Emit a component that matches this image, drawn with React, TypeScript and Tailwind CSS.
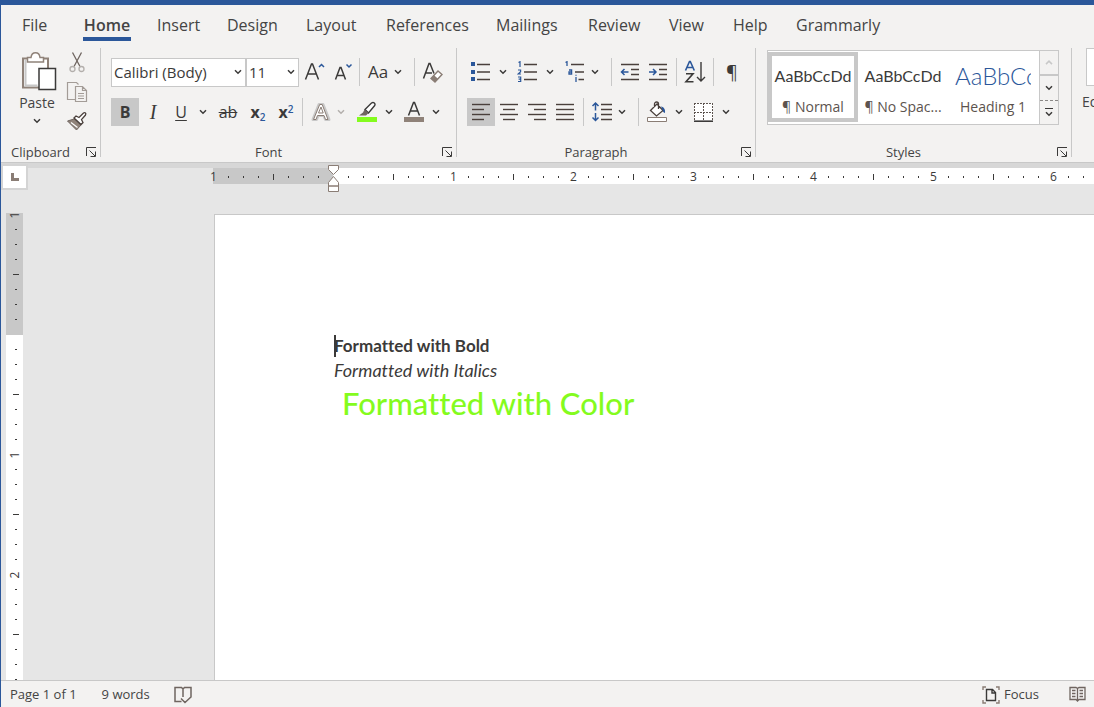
import React from "react";

const UI = "font-['Open_Sans','Noto_Sans',sans-serif]";
const DOC = "font-['Lato','Open_Sans',sans-serif] [font-variant-ligatures:none]";

/* ---------- shared pieces ---------- */

function Chevron({ tone = "#3b3a39" }: { tone?: string }) {
  return (
    <svg width="8" height="6" viewBox="0 0 8 6" fill="none" stroke={tone} strokeWidth="1.5">
      <path d="M1 1.2 4 4.2 7 1.2" />
    </svg>
  );
}

type ToolProps = { label: string; active?: boolean; children: React.ReactNode };

function Tool({ label, active, children }: ToolProps) {
  return (
    <button
      type="button"
      aria-label={label}
      className={`flex h-7 w-7 shrink-0 items-center justify-center text-[#3b3a39] ${active ? "bg-[#c8c8c8]" : ""}`}
    >
      {children}
    </button>
  );
}

function Arrow({ label, narrow, tone }: { label: string; narrow?: boolean; tone?: string }) {
  return (
    <button
      type="button"
      aria-label={label}
      className={`flex h-7 shrink-0 items-center justify-center ${narrow ? "w-3" : "w-4"}`}
    >
      <Chevron tone={tone} />
    </button>
  );
}

function Rule({ className = "mx-1" }: { className?: string }) {
  return <span className={`h-7 w-px shrink-0 bg-[#c8c8c8] ${className}`} />;
}

function Launcher({ label }: { label: string }) {
  return (
    <button type="button" aria-label={label} className="absolute right-px bottom-0 flex h-4 w-4 items-center justify-center">
      <svg width="11" height="11" viewBox="0 0 11 11" fill="none" stroke="#3b3a39">
        <path d="M.5 9V.5H10M3.5 3.5 9 9M9.5 4.5v5h-5" />
      </svg>
    </button>
  );
}

function Group({ name, width, children }: { name: string; width: string; children: React.ReactNode }) {
  return (
    <>
      <section aria-label={name} className={`relative flex shrink-0 flex-col justify-between ${width}`}>
        {children}
        <h2 className="pr-5 text-center text-[13px] leading-4 text-[#444]">{name}</h2>
        <Launcher label={`${name} settings`} />
      </section>
      <span className="h-[109px] w-px shrink-0 bg-[#c8c8c8]" />
    </>
  );
}

/* ---------- icons ---------- */

const svg = { width: 22, height: 22, viewBox: "0 0 22 22", fill: "none" } as const;

function LinesIcon({ rows }: { rows: [number, number][] }) {
  return (
    <svg {...svg} stroke="#4a403c" strokeWidth="1.4">
      {rows.map(([a, b], i) => (
        <path key={i} d={`M${a} ${3.5 + i * 5}H${b}`} />
      ))}
    </svg>
  );
}

function BulletsIcon() {
  return (
    <svg {...svg}>
      <path d="M1 1h4v4H1zM1 9h4v4H1zM1 16h4v4H1z" fill="#2b579a" />
      <path d="M7 3.5h13M7 11h13M7 18.5h13" stroke="#4a403c" strokeWidth="1.4" />
    </svg>
  );
}

function NumberingIcon() {
  return (
    <svg {...svg}>
      <path
        d="M1.500 1.500 3 .7V6M1 9h2.600v1.800L1.200 13H4M1 16h2.700v4.500H1M1.600 18.200h2"
        stroke="#2b579a"
        strokeWidth="1.2"
      />
      <path d="M7 3.5h13M7 11h13M7 18.5h13" stroke="#4a403c" strokeWidth="1.4" />
    </svg>
  );
}

function MultilevelIcon() {
  return (
    <svg {...svg}>
      <path
        d="M1.500 1.500 3 .7V5M5 9h2.600v4H5v-2h2.600M12 16v5M12 13.800v1"
        stroke="#2b579a"
        strokeWidth="1.3"
      />
      <path d="M7 3.5h13M11 11h9M14.500 18.500h5.500" stroke="#4a403c" strokeWidth="1.4" />
    </svg>
  );
}

function IndentIcon({ out }: { out?: boolean }) {
  return (
    <svg {...svg}>
      <path d="M2 3.500h18M12 8.500h8M12 13.500h8M2 18.500h18" stroke="#4a403c" strokeWidth="1.400" />
      <path d={out ? "M9.500 11H2.500M5.500 8l-3 3 3 3" : "M2 11h7M6 8l3 3-3 3"} stroke="#2b579a" strokeWidth="1.500" />
    </svg>
  );
}

function SortIcon() {
  return (
    <svg width="22" height="24" viewBox="0 0 22 24" fill="none">
      <path d="m1.500 10.500 4-9h.8l4 9M3 7.500h6" stroke="#2b579a" strokeWidth="1.600" />
      <path d="M2 13.800h7L2 21.700h7.500" stroke="#3b3a39" strokeWidth="1.600" />
      <path d="M17 2v19M13 17l4 4 4-4" stroke="#3b3a39" strokeWidth="1.400" />
    </svg>
  );
}

function SpacingIcon() {
  return (
    <svg {...svg}>
      <path d="M4.500 2.500v7M1.500 5l3-3 3 3M4.500 12v7M1.500 16.500l3 3 3-3" stroke="#2b579a" strokeWidth="1.500" />
      <path d="M10 3.500h11M10 8.500h11M10 13.500h11M10 18.500h11" stroke="#4a403c" strokeWidth="1.400" />
    </svg>
  );
}

function ShadingIcon() {
  return (
    <svg {...svg}>
      <path d="M11 3 17 9.500 10.500 15 4.500 9.500zM8.500 6V3a2 2 0 0 1 4 0v5" stroke="#4a403c" strokeWidth="1.300" fill="#fff" />
      <path d="M15 5.500c3 .5 4.500 3 4 6.500-2-.5-2-2-2.500-3z" fill="#2b579a" />
      <path d="M1.500 16.500h19v4h-19z" fill="#fff" stroke="#8a7d75" />
    </svg>
  );
}

function BordersIcon() {
  return (
    <svg {...svg}>
      <path d="M1 2h19v18H1z" fill="#fff" />
      <path d="M1 2.500h19M1 11.500h19M1.500 2v18M10.500 2v18M19.500 2v18" stroke="#5c534e" strokeDasharray="2 1" />
      <path d="M1 20.200h19" stroke="#3b3a39" strokeWidth="1.600" />
    </svg>
  );
}

function GrowIcon() {
  return (
    <svg {...svg}>
      <path d="M1.500 18.500 7.500 3h1l6 15.500M4 13h8" stroke="#3b3a39" strokeWidth="1.500" />
      <path d="m15 6 2.500-2.500L20 6" stroke="#2b579a" strokeWidth="1.500" />
    </svg>
  );
}

function ShrinkIcon() {
  return (
    <svg {...svg}>
      <path d="M3.500 18.500 8 6.500h1l4.500 12M5.500 14.500h6" stroke="#3b3a39" strokeWidth="1.500" />
      <path d="M14.500 3.500 17 6l2.500-2.500" stroke="#2b579a" strokeWidth="1.500" />
    </svg>
  );
}

function ClearFormatIcon() {
  return (
    <svg {...svg}>
      <path d="M1.500 17.500 7 2.500h1l4 10M4 12h6" stroke="#3b3a39" strokeWidth="1.500" />
      <path d="m9 17.500 7-7.500 4 3.500-7 7.500z" fill="#fff" stroke="#8a7d75" strokeWidth="1.400" />
      <path d="m9 17.500 3-3.200 4 3.500-3 3.200z" fill="#8a7d75" />
    </svg>
  );
}

function EffectsIcon() {
  return (
    <svg {...svg} strokeLinejoin="round">
      <path d="M3 18.500 9 3.500h4l6 15h-3.500l-1.500-4H8l-1.500 4z" fill="#fff" stroke="#c8c8c8" strokeWidth="3" />
      <path d="M3.500 18.500 9.700 3.500h2.500L18 18.500h-2.500l-1.500-4H7.500L6 18.500zM8.500 12h4.700L11 6z" fill="#fff" stroke="#8a7d75" />
    </svg>
  );
}

function HighlightIcon() {
  return (
    <svg {...svg}>
      <path d="M9 8.500 15.500 2c2-1.500 4.500.5 3 2.800L12.500 12z" fill="#fff" stroke="#3b3a39" strokeWidth="1.400" />
      <path d="M8.500 8.500 12.500 12 10 14.500H3l4-3z" fill="#6f6560" />
      <path d="M1 16h20v5H1z" fill="#84fb1e" />
    </svg>
  );
}

function FontColorIcon() {
  return (
    <svg {...svg}>
      <path d="M5.500 14.500 10.500 1.500h1l5 13M7.500 10h7" stroke="#3b3a39" strokeWidth="1.500" />
      <path d="M1 16h20v5H1z" fill="#8f8279" />
    </svg>
  );
}

function PasteIcon() {
  return (
    <svg className="ml-1 shrink-0" width="36" height="40" viewBox="0 0 36 40" fill="none">
      <path d="M2 6.500h25v29H2z" fill="#fff" stroke="#8f8279" strokeWidth="2" />
      <path d="M4.500 8v25.500h12" stroke="#c8c8c8" strokeWidth="2" />
      <path d="M6.500 10V5.500H10C10.500 1.500 12.500.8 14.500.8s4 .7 4.500 4.700h3.500V10z" fill="#fff" stroke="#8f8279" strokeWidth="1.500" />
      <path d="M18 16.500h16.500V37.500H18z" fill="#fff" stroke="#3b3a39" strokeWidth="1.500" />
    </svg>
  );
}

function CutIcon() {
  return (
    <svg {...svg} strokeWidth="1.300">
      <path d="M6.500.5 14 14.500M15.500.5 8 14.500" stroke="#6f6560" />
      <circle cx="6.500" cy="17" r="2.500" stroke="#b3afac" />
      <circle cx="15.500" cy="17" r="2.500" stroke="#b3afac" />
    </svg>
  );
}

function CopyIcon() {
  return (
    <svg {...svg} stroke="#a39c97" strokeWidth="1.200">
      <path d="M9 18.500H1.500V1.500h9l2 2" />
      <path d="M9.500 5.500h7l4 4v11h-11zM16.500 5.500v4h4M12 12.500h6M12 15h6M12 17.500h6" />
    </svg>
  );
}

function BrushIcon() {
  return (
    <svg {...svg}>
      <path d="M1.500 11 8 9l7 6-4.500 5z" fill="#8f8279" stroke="#6f6560" />
      <path d="m5 12.500 6.500 5" stroke="#fff" strokeWidth="1.200" />
      <path d="m8 8 2-2 3 1.500L17.500 3c1.500-1 3 .5 2 2L15.500 9.500l1.500 3-2 2z" fill="#fff" stroke="#4a403c" strokeWidth="1.300" />
    </svg>
  );
}

/* ---------- tab strip ---------- */

const TABS = ["File", "Home", "Insert", "Design", "Layout", "References", "Mailings", "Review", "View", "Help", "Grammarly"];

function TabStrip() {
  return (
    <nav
      aria-label="Ribbon tabs"
      className="grid shrink-0 grid-cols-[61px_74px_70px_79px_80px_110px_92px_81px_64px_63px_1fr] pt-[7px] pb-1 pl-[21px] text-[16px] leading-6 text-[#444]"
    >
      {TABS.map((tab) => (
        <div key={tab} className="flex h-[29px]">
          <button
            type="button"
            className={tab === "Home" ? "w-12 border-b-4 border-[#2b579a] font-semibold" : "border-b-4 border-transparent"}
          >
            {tab}
          </button>
        </div>
      ))}
    </nav>
  );
}

/* ---------- ribbon groups ---------- */

function ClipboardGroup() {
  return (
    <Group name="Clipboard" width="w-[99px]">
      <div className="flex gap-2 pt-1 pl-[18px]">
        <button type="button" className="flex w-9 flex-col items-center text-[14px] leading-5 text-[#444]">
          <PasteIcon />
          <span className="pt-px">Paste</span>
          <span className="flex h-4 items-center">
            <Chevron />
          </span>
        </button>
        <div className="flex flex-col">
          <button type="button" aria-label="Cut" className="flex h-[29px] w-7 justify-center"><CutIcon /></button>
          <button type="button" aria-label="Copy" className="flex h-[29px] w-7 justify-center"><CopyIcon /></button>
          <button type="button" aria-label="Format painter" className="flex h-6 w-7 justify-center"><BrushIcon /></button>
        </div>
      </div>
    </Group>
  );
}

function Combo({ label, value, options, width }: { label: string; value: string; options: string[]; width: string }) {
  return (
    <label className={`relative flex h-[29px] items-center border border-[#c8c8c8] bg-white ${width}`}>
      <span className="sr-only">{label}</span>
      <select
        defaultValue={value}
        className="h-full w-full appearance-none bg-transparent pl-0.5 text-[15px] text-[#3b3a39] outline-none"
      >
        {options.map((o) => (
          <option key={o}>{o}</option>
        ))}
      </select>
      <span className="pointer-events-none absolute right-[3px] flex">
        <Chevron />
      </span>
    </label>
  );
}

function FontGroup() {
  return (
    <Group name="Font" width="w-[355px]">
      <div className="flex flex-col gap-3 pt-2.5 pl-2.5">
        <div className="flex h-7 items-center">
          <Combo label="Font family" value="Calibri (Body)" options={["Calibri (Body)", "Arial"]} width="w-[135px]" />
          <Combo label="Font size" value="11" options={["10", "11", "12"]} width="w-[53px]" />
          <span className="w-0.5" />
          <Tool label="Grow font"><GrowIcon /></Tool>
          <Tool label="Shrink font"><ShrinkIcon /></Tool>
          <Rule className="mr-1 ml-0.5" />
          <Tool label="Change case"><span className="text-[17px]">Aa</span></Tool>
          <Arrow label="Change case options" narrow />
          <Rule className="mr-1 ml-2.5" />
          <Tool label="Clear formatting"><ClearFormatIcon /></Tool>
        </div>
        <div className="flex h-7 items-center">
          <Tool label="Bold" active><span className="text-[16px] font-bold">B</span></Tool>
          <Tool label="Italic"><span className="font-['Liberation_Serif',serif] text-[20px] italic">I</span></Tool>
          <Tool label="Underline"><span className="text-[16px] underline underline-offset-2">U</span></Tool>
          <Arrow label="Underline options" />
          <span className="w-[3px]" />
          <Tool label="Strikethrough"><span className="text-[16px] line-through">ab</span></Tool>
          <span className="w-0.5" />
          <Tool label="Subscript">
            <span className="text-[16px] font-bold">x<sub className="text-[10px] font-semibold text-[#2b579a]">2</sub></span>
          </Tool>
          <Tool label="Superscript">
            <span className="text-[16px] font-bold">x<sup className="text-[10px] font-semibold text-[#2b579a]">2</sup></span>
          </Tool>
          <Rule className="mr-1 ml-0.5" />
          <Tool label="Text effects"><EffectsIcon /></Tool>
          <Arrow label="Text effects options" narrow tone="#b3afac" />
          <span className="w-1.5" />
          <Tool label="Highlight"><HighlightIcon /></Tool>
          <Arrow label="Highlight options" />
          <span className="w-[3px]" />
          <Tool label="Font color"><FontColorIcon /></Tool>
          <Arrow label="Font color options" />
        </div>
      </div>
    </Group>
  );
}

function ParagraphGroup() {
  return (
    <Group name="Paragraph" width="w-[298px]">
      <div className="flex flex-col gap-3 pt-2.5 pl-2.5">
        <div className="flex h-7 items-center">
          <Tool label="Bullets"><BulletsIcon /></Tool>
          <Arrow label="Bullet options" />
          <span className="w-[3px]" />
          <Tool label="Numbering"><NumberingIcon /></Tool>
          <Arrow label="Numbering options" />
          <span className="w-[3px]" />
          <Tool label="Multilevel list"><MultilevelIcon /></Tool>
          <Arrow label="Multilevel options" narrow />
          <Rule className="mr-1 ml-2.5" />
          <Tool label="Decrease indent"><IndentIcon out /></Tool>
          <Tool label="Increase indent"><IndentIcon /></Tool>
          <Rule />
          <Tool label="Sort"><SortIcon /></Tool>
          <Rule />
          <Tool label="Show marks"><span className="text-[18px]">¶</span></Tool>
        </div>
        <div className="flex h-7 items-center">
          <Tool label="Align left" active><LinesIcon rows={[[2, 20], [2, 14], [2, 20], [2, 14]]} /></Tool>
          <Tool label="Center"><LinesIcon rows={[[2, 20], [5, 17], [2, 20], [5, 17]]} /></Tool>
          <Tool label="Align right"><LinesIcon rows={[[2, 20], [8, 20], [2, 20], [8, 20]]} /></Tool>
          <Tool label="Justify"><LinesIcon rows={[[2, 20], [2, 20], [2, 20], [2, 20]]} /></Tool>
          <Rule />
          <Tool label="Line spacing"><SpacingIcon /></Tool>
          <Arrow label="Line spacing options" narrow />
          <Rule className="mr-1 ml-2.5" />
          <Tool label="Shading"><ShadingIcon /></Tool>
          <Arrow label="Shading options" />
          <span className="w-[3px]" />
          <Tool label="Borders"><BordersIcon /></Tool>
          <Arrow label="Border options" />
        </div>
      </div>
    </Group>
  );
}

function StyleCard({ sample, name, active, heading }: { sample: string; name: string; active?: boolean; heading?: boolean }) {
  return (
    <button
      type="button"
      className={`flex w-[90px] shrink-0 flex-col justify-end border-4 text-[14px] ${active ? "border-[#c8c8c8]" : "border-transparent"}`}
    >
      <span
        className={
          heading
            ? `w-[76px] self-center overflow-hidden text-left text-[24px] leading-10 font-light whitespace-nowrap text-[#2b579a] ${DOC}`
            : `self-center text-[16px] leading-10 whitespace-nowrap text-[#3b3a39] ${DOC}`
        }
      >
        {sample}
      </span>
      <span className="self-center leading-[22px] whitespace-nowrap text-[#5c534e]">{name}</span>
    </button>
  );
}

function StylesGroup() {
  return (
    <Group name="Styles" width="w-[315px]">
      <div className="pt-0.5 pl-[11px]">
        <div className="flex h-[75px] w-[292px] border border-[#c8c8c8] bg-white">
          <div className="flex flex-1 overflow-hidden pt-px pb-0.5">
            <StyleCard sample="AaBbCcDd" name="¶ Normal" active />
            <StyleCard sample="AaBbCcDd" name="¶ No Spac..." />
            <StyleCard sample="AaBbCcDd" name="Heading 1" heading />
          </div>
          <div className="flex w-[19px] flex-col border-l border-[#c8c8c8] bg-[#f3f2f1]">
            <button type="button" aria-label="Scroll styles up" className="flex flex-1 rotate-180 items-center justify-center">
              <Chevron tone="#c8c8c8" />
            </button>
            <button type="button" aria-label="Scroll styles down" className="flex flex-1 items-center justify-center border-t-2 border-[#c8c8c8]">
              <Chevron />
            </button>
            <button type="button" aria-label="More styles" className="flex flex-1 flex-col items-center justify-center gap-0.5 border-t border-dashed border-[#8a8886]">
              <span className="h-px w-2 bg-[#3b3a39]" />
              <Chevron />
            </button>
          </div>
        </div>
      </div>
    </Group>
  );
}

function Ribbon() {
  return (
    <div className="flex h-28 shrink-0 overflow-hidden">
      <ClipboardGroup />
      <FontGroup />
      <ParagraphGroup />
      <StylesGroup />
      <button type="button" className="flex w-20 shrink-0 flex-col items-start pl-2.5 text-[14px] leading-8 text-[#444]">
        <span className="ml-1 h-[38px] w-16 shrink-0 border border-[#c8c8c8] bg-white" />
        <span>Editing</span>
      </button>
    </div>
  );
}

/* ---------- rulers ---------- */

function range(from: number, to: number) {
  return Array.from({ length: to - from }, (_, i) => from + i);
}

function HTick({ i }: { i: number }) {
  return (
    <span className="flex h-[18px] w-[15px] shrink-0 items-center justify-center text-[12px] leading-4 text-[#3b3a39]">
      {i % 8 === 0 ? Math.abs(i / 8) : <span className={i % 4 === 0 ? "h-1.5 w-px bg-[#3b3a39]" : "h-0.5 w-px bg-[#3b3a39]"} />}
    </span>
  );
}

function VTick({ i }: { i: number }) {
  return (
    <span className="flex h-[15px] w-[17px] shrink-0 items-center justify-center pl-0.5 text-[12px] leading-4 text-[#3b3a39]">
      {i % 8 === 0 ? (
        <span className="-rotate-90">{Math.abs(i / 8)}</span>
      ) : (
        <span className={i % 4 === 0 ? "h-px w-1.5 bg-[#3b3a39]" : "h-px w-0.5 bg-[#3b3a39]"} />
      )}
    </span>
  );
}

function HorizontalRuler() {
  return (
    <div className="flex h-[45px] shrink-0">
      <div className="w-[212px] shrink-0">
        <button
          type="button"
          aria-label="Tab stop"
          className="-mt-1 flex h-[26px] w-[27px] items-center justify-center border-2 border-[#d4d4d4] bg-white"
        >
          <svg width="8" height="8" viewBox="0 0 8 8" fill="none" stroke="#8a7d75" strokeWidth="3">
            <path d="M1.500 0v6.500H8" />
          </svg>
        </button>
      </div>
      <div className="relative flex h-4 w-[120px] shrink-0 bg-[#c8c8c8]">
        <div className="-ml-[7px] flex">
          {range(-8, 0).map((i) => <HTick key={i} i={i} />)}
        </div>
        <svg className="absolute -top-1 -right-[7px]" width="12" height="29" viewBox="0 0 12 29" fill="#fff" stroke="#8a7d75">
          <path d="M.5 1.500h10v4l-5 5-5-5zM.5 18.500l5-6 5 6v3.500H.5zM.5 22h10v5.500H.5z" />
        </svg>
      </div>
      <div className="flex h-4 flex-1 overflow-hidden bg-white pl-2">
        {range(1, 60).map((i) => <HTick key={i} i={i} />)}
      </div>
    </div>
  );
}

function VerticalRuler() {
  return (
    <div className="ml-[5px] flex w-[17px] shrink-0 flex-col overflow-hidden bg-white">
      <div className="h-[122px] shrink-0 bg-[#c8c8c8]">
        <div className="-mt-1.5">
          {range(-8, 0).map((i) => <VTick key={i} i={i} />)}
        </div>
      </div>
      <div className="flex h-0 flex-1 flex-col overflow-hidden pt-[7px]">
        {range(1, 80).map((i) => <VTick key={i} i={i} />)}
      </div>
    </div>
  );
}

/* ---------- document and status bar ---------- */

function Page() {
  return (
    <main className={`mt-px ml-[191px] flex-1 overflow-hidden border-t border-l border-[#c8c8c8] bg-white pt-[119px] pl-[119px] text-[#3b3a39] ${DOC}`}>
      <p className="flex h-6 items-center text-[17px] font-bold">
        <span className="-mr-0.5 h-[22px] w-0.5 bg-[#3b3a39]" />
        Formatted with Bold
      </p>
      <p className="text-[18px] leading-6 italic">Formatted with Italics</p>
      <p className="pl-2 text-[31px] leading-[42px] font-medium text-[#84fb1e]">Formatted with Color</p>
    </main>
  );
}

function StatusBar() {
  return (
    <footer className="flex h-[27px] shrink-0 items-center border-t border-[#c8c8c8] bg-[#f3f2f1] pt-px pr-2 pl-[9px] text-[13px] text-[#444]">
      <span>Page 1 of 1</span>
      <span className="ml-[25px]">9 words</span>
      <button type="button" aria-label="Proofing" className="ml-6">
        <svg width="18" height="18" viewBox="0 0 18 18" fill="none" stroke="#6f6560" strokeWidth="1.500">
          <path d="M7.500 15.500H1V1.500h6.500L9 3l1.500-1.500H17v9M9 3v8M7 12.500l4 4 6.500-6" />
        </svg>
      </button>
      <button type="button" className="ml-auto flex items-center gap-1">
        <svg width="18" height="18" viewBox="0 0 18 18" fill="none" strokeWidth="1.400">
          <path d="M1 4V1h3M14 1h3v3M17 14v3h-3M4 17H1v-3" stroke="#8a7d75" />
          <path d="M4.500 3.500h6l3 3v8h-9zM10 3.500V7h3.500" stroke="#3b3a39" />
        </svg>
        Focus
      </button>
      <button type="button" aria-label="Read mode" className="ml-[30px]">
        <svg width="17" height="17" viewBox="0 0 17 17" fill="none" stroke="#6f6560" strokeWidth="1.300">
          <path d="M8.500 2.500 7 1.500H1v12h6l1.500 1.500 1.500-1.500h6v-12h-6zM8.500 2.500V16M3 4.500h3.500M3 7.500h3.500M3 10.500h3.500M10.500 4.500H14M10.500 7.500H14M10.500 10.500H14" />
        </svg>
      </button>
    </footer>
  );
}

export default function App() {
  return (
    <div className={`flex h-screen flex-col overflow-hidden border-t-[5px] border-l border-[#2b579a] bg-[#e6e6e6] ${UI}`}>
      <header className="flex shrink-0 flex-col gap-[3px] bg-[#f3f2f1] pb-0.5">
        <TabStrip />
        <Ribbon />
      </header>
      <div className="h-1.5 shrink-0 border-t border-[#c8c8c8] bg-[#d7d7d7]" />
      <HorizontalRuler />
      <div className="flex min-h-0 flex-1">
        <VerticalRuler />
        <Page />
      </div>
      <StatusBar />
    </div>
  );
}
